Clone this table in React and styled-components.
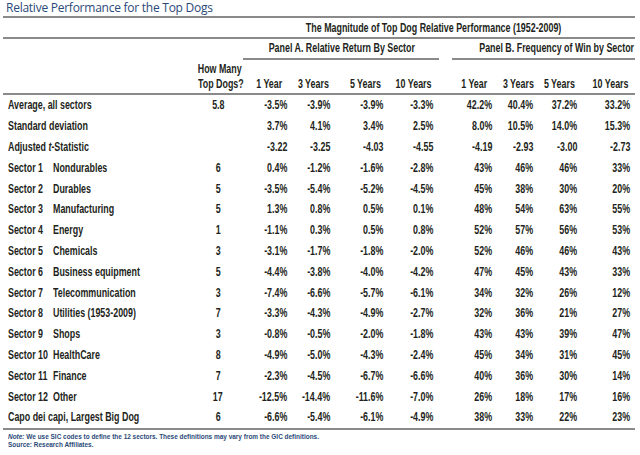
import React from "react";
import styled, { createGlobalStyle } from "styled-components";

const GlobalStyle = createGlobalStyle`
  html, body {
    margin: 0;
    padding: 0;
    background: #ffffff;
  }
  body {
    font-family: "Liberation Sans", Arial, sans-serif;
  }
`;

const COLS = "187px 56px 41px 43px 53px 50px 59px 41px 44px 53px";

const Colors = {
  navy: "#2b4a78",
  text: "#231f20",
  rule: "#8a8a8a",
};

const sectors = [
  { label: "Average, all sectors", dogs: "5.8", a: ["-3.5%", "-3.9%", "-3.9%", "-3.3%"], b: ["42.2%", "40.4%", "37.2%", "33.2%"] },
  { label: "Standard deviation", dogs: "", a: ["3.7%", "4.1%", "3.4%", "2.5%"], b: ["8.0%", "10.5%", "14.0%", "15.3%"] },
  { label: "tstat", dogs: "", a: ["-3.22", "-3.25", "-4.03", "-4.55"], b: ["-4.19", "-2.93", "-3.00", "-2.73"] },
  { sector: "Sector 1", name: "Nondurables", dogs: "6", a: ["0.4%", "-1.2%", "-1.6%", "-2.8%"], b: ["43%", "46%", "46%", "33%"] },
  { sector: "Sector 2", name: "Durables", dogs: "5", a: ["-3.5%", "-5.4%", "-5.2%", "-4.5%"], b: ["45%", "38%", "30%", "20%"] },
  { sector: "Sector 3", name: "Manufacturing", dogs: "5", a: ["1.3%", "0.8%", "0.5%", "0.1%"], b: ["48%", "54%", "63%", "55%"] },
  { sector: "Sector 4", name: "Energy", dogs: "1", a: ["-1.1%", "0.3%", "0.5%", "0.8%"], b: ["52%", "57%", "56%", "53%"] },
  { sector: "Sector 5", name: "Chemicals", dogs: "3", a: ["-3.1%", "-1.7%", "-1.8%", "-2.0%"], b: ["52%", "46%", "46%", "43%"] },
  { sector: "Sector 6", name: "Business equipment", dogs: "5", a: ["-4.4%", "-3.8%", "-4.0%", "-4.2%"], b: ["47%", "45%", "43%", "33%"] },
  { sector: "Sector 7", name: "Telecommunication", dogs: "3", a: ["-7.4%", "-6.6%", "-5.7%", "-6.1%"], b: ["34%", "32%", "26%", "12%"] },
  { sector: "Sector 8", name: "Utilities (1953-2009)", dogs: "7", a: ["-3.3%", "-4.3%", "-4.9%", "-2.7%"], b: ["32%", "36%", "21%", "27%"] },
  { sector: "Sector 9", name: "Shops", dogs: "3", a: ["-0.8%", "-0.5%", "-2.0%", "-1.8%"], b: ["43%", "43%", "39%", "47%"] },
  { sector: "Sector 10", name: "HealthCare", dogs: "8", a: ["-4.9%", "-5.0%", "-4.3%", "-2.4%"], b: ["45%", "34%", "31%", "45%"] },
  { sector: "Sector 11", name: "Finance", dogs: "7", a: ["-2.3%", "-4.5%", "-6.7%", "-6.6%"], b: ["40%", "36%", "30%", "14%"] },
  { sector: "Sector 12", name: "Other", dogs: "17", a: ["-12.5%", "-14.4%", "-11.6%", "-7.0%"], b: ["26%", "18%", "17%", "16%"] },
  { label: "Capo dei capi, Largest Big Dog", dogs: "6", a: ["-6.6%", "-5.4%", "-6.1%", "-4.9%"], b: ["38%", "33%", "22%", "23%"] },
];

const years = ["1 Year", "3 Years", "5 Years", "10 Years"];

const App = () => {
  return (
    <>
      <GlobalStyle />
      <Page>
        <Title>Relative Performance for the Top Dogs</Title>
        <Rule />
        <SuperHeader>
          <MagnitudeCell>
            <Narrow $origin="center">The Magnitude of Top Dog Relative Performance (1952-2009)</Narrow>
          </MagnitudeCell>
        </SuperHeader>
        <Rule />
        <PanelRow>
          <PanelCell $start={3} $end={7} $left={-3} $right={-6}>
            <Narrow $origin="center">Panel A. Relative Return By Sector</Narrow>
          </PanelCell>
          <PanelCell $start={7} $end={11} $left={19} $right={-5}>
            <Narrow $origin="center">Panel B. Frequency of Win by Sector</Narrow>
          </PanelCell>
        </PanelRow>
        <ColHeadRow>
          <HeadCell $col={2} $center>
            <Narrow $origin="center">How Many</Narrow>
            <br />
            <Narrow $origin="center">Top Dogs?</Narrow>
          </HeadCell>
          {years.map((y, i) => (
            <HeadCell key={"a" + y} $first={i === 0}>
              <Narrow $origin="right">{y}</Narrow>
            </HeadCell>
          ))}
          {years.map((y, i) => (
            <HeadCell key={"b" + y} $first={i === 0}>
              <Narrow $origin="right">{y}</Narrow>
            </HeadCell>
          ))}
        </ColHeadRow>
        <Rule />
        <Body>
          {sectors.map((r, i) => (
            <DataRow key={i}>
              <LabelCell>
                {r.sector ? (
                  <>
                    <SectorNo>
                      <Narrow $origin="left">{r.sector}</Narrow>
                    </SectorNo>
                    <Narrow $origin="left">{r.name}</Narrow>
                  </>
                ) : r.label === "tstat" ? (
                  <Narrow $origin="left">
                    Adjusted <i>t</i>-Statistic
                  </Narrow>
                ) : (
                  <Narrow $origin="left">{r.label}</Narrow>
                )}
              </LabelCell>
              <DogsCell>
                <Narrow $origin="center">{r.dogs}</Narrow>
              </DogsCell>
              {r.a.map((v, j) => (
                <NumCell key={"a" + j}>
                  <Narrow $origin="right">{v}</Narrow>
                </NumCell>
              ))}
              {r.b.map((v, j) => (
                <NumCell key={"b" + j}>
                  <Narrow $origin="right">{v}</Narrow>
                </NumCell>
              ))}
            </DataRow>
          ))}
        </Body>
        <Rule />
        <Footnote>
          <FootLine>
            <i>Note:</i> We use SIC codes to define the 12 sectors. These definitions may vary from the GIC definitions.
          </FootLine>
          <FootLine>Source: Research Affiliates.</FootLine>
        </Footnote>
      </Page>
    </>
  );
};

export default App;

const Page = styled.div`
  width: 632px;
  padding: 0 5px 0 3px;
  color: ${Colors.text};
`;

const Narrow = styled.span`
  display: inline-block;
  white-space: nowrap;
  transform: scaleX(0.74);
  transform-origin: ${(p) => p.$origin || "left"} center;
`;

const Title = styled.div`
  font-family: "Open Sans", "Noto Sans", sans-serif;
  font-size: 12px;
  color: ${Colors.navy};
  height: 16px;
  line-height: 15px;
  padding-left: 3px;
  letter-spacing: -0.25px;
`;

const Rule = styled.div`
  height: 2px;
  background: ${Colors.rule};
`;

const GridRow = styled.div`
  display: grid;
  grid-template-columns: ${COLS};
  align-items: center;
  font-size: 12px;
  font-weight: bold;
`;

const SuperHeader = styled(GridRow)`
  height: 19px;
`;

const MagnitudeCell = styled.div`
  grid-column: 3 / 11;
  text-align: center;
  padding-right: 8px;
`;

const PanelRow = styled(GridRow)`
  height: 21px;
`;

const PanelCell = styled.div`
  grid-column: ${(p) => p.$start} / ${(p) => p.$end};
  margin-left: ${(p) => p.$left}px;
  margin-right: ${(p) => p.$right}px;
  text-align: center;
  height: 19px;
  line-height: 19px;
  border-bottom: 2px solid ${Colors.rule};
  align-self: end;
`;

const ColHeadRow = styled(GridRow)`
  height: 33px;
  align-items: end;
  padding-bottom: 1px;
  box-sizing: border-box;
`;

const HeadCell = styled.div`
  grid-column: ${(p) => (p.$col ? p.$col : "auto")};
  text-align: ${(p) => (p.$center ? "center" : "right")};
  line-height: 15px;
  white-space: nowrap;
  padding-right: ${(p) => (p.$first ? 5 : p.$center ? 0 : 2)}px;
`;

const Body = styled.div`
  display: flex;
  flex-direction: column;
`;

const DataRow = styled(GridRow)`
  height: 20.8px;
`;

const LabelCell = styled.div`
  display: flex;
  padding-left: 5px;
  white-space: nowrap;
`;

const SectorNo = styled.span`
  width: 45px;
  flex: none;
`;

const DogsCell = styled.div`
  text-align: center;
`;

const NumCell = styled.div`
  text-align: right;
`;

const Footnote = styled.div`
  margin-top: 3px;
  padding-left: 5px;
  font-size: 7.5px;
  line-height: 8px;
  color: ${Colors.navy};
  font-weight: bold;
`;

const FootLine = styled.div`
  white-space: nowrap;
  transform: scaleX(0.86);
  transform-origin: left center;
`;
